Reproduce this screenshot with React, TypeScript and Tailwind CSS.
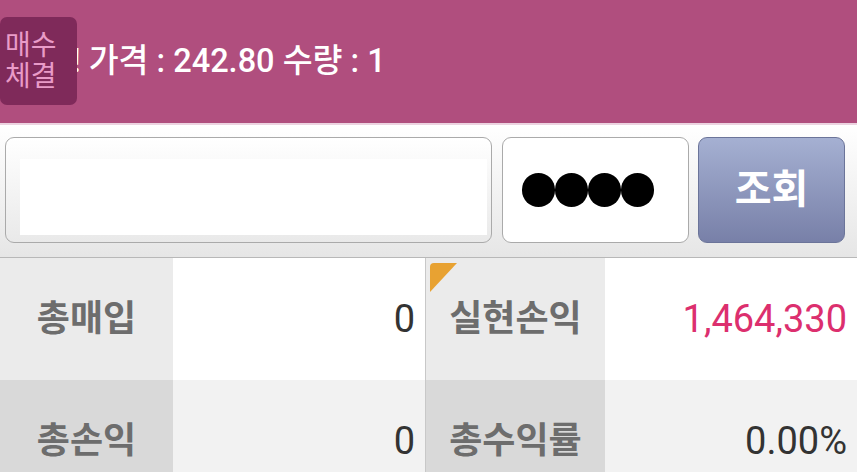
import React from 'react';

const font = { fontFamily: "Roboto, 'Noto Sans CJK KR', sans-serif" };

function Cell({ label, value, tone, valueClass, corner }: { label: string; value: string; tone: 'a' | 'b'; valueClass?: string; corner?: boolean }) {
  return (
    <>
      <div
        className={`relative flex items-center justify-center font-bold text-[36px] text-[#6d6d6d] ${tone === 'a' ? 'bg-[#ebebeb]' : 'bg-[#d9d9d9]'} ${corner !== undefined ? 'border-l border-[#c8c8c8]' : ''}`}
      >
        {corner && (
          <svg className="absolute left-[2px] top-[4px]" width="30" height="30" viewBox="0 0 30 30">
            <path d="M2 5 Q2 1 6 1 L29 1 L2 30 Z" fill="#e8a232" />
          </svg>
        )}
        {label}
      </div>
      <div
        className={`flex items-center justify-end pr-[10px] text-[38px] ${tone === 'a' ? 'bg-white' : 'bg-[#f2f2f2]'} ${valueClass ?? 'text-[#333333]'}`}
      >
        {value}
      </div>
    </>
  );
}

export default function App() {
  return (
    <div className="w-[857px] h-[472px] overflow-hidden bg-white" style={font}>
      {/* notice bar */}
      <div className="relative h-[125px] bg-[#b04e7e] flex items-center pl-[72px] border-b-2 border-[#ecd3e0]">
        <div className="absolute left-0 top-[17px] w-[77px] h-[88px] rounded-[7px] bg-[#7f2a5a] flex flex-col justify-center pl-[5px] text-[28px] leading-[31px] text-[#e99bc8]">
          <span>매수</span>
          <span>체결</span>
        </div>
        <span className="text-white text-[32.5px] font-medium leading-none">! 가격 : 242.80 수량 : 1</span>
      </div>

      {/* search bar */}
      <div className="h-[133px] bg-gradient-to-b from-white to-[#e6e6e6] flex items-start pt-[12px] pl-[5px] gap-[10px] border-b border-[#b8b8b8]">
        <div className="w-[487px] h-[106px] rounded-[9px] border border-[#aaaaaa] bg-gradient-to-b from-white to-[#e9e9e9] pl-[14px] pr-[4px] pt-[21px] pb-[7px]">
          <div className="w-full h-full bg-white" />
        </div>
        <div className="w-[187px] h-[106px] rounded-[9px] border border-[#aaaaaa] bg-white flex items-center pl-[19px]">
          <div className="w-[33px] h-[34px] rounded-full bg-black" />
          <div className="w-[33px] h-[34px] rounded-full bg-black" />
          <div className="w-[33px] h-[34px] rounded-full bg-black" />
          <div className="w-[33px] h-[34px] rounded-full bg-black" />
        </div>
        <button className="-ml-[1px] w-[147px] h-[106px] rounded-[9px] border border-[#6b7499] bg-gradient-to-b from-[#a5b0d2] to-[#7880a8] text-white text-[40px] font-bold">
          조회
        </button>
      </div>

      {/* summary grid */}
      <div className="grid grid-cols-[173px_252px_180px_252px] grid-rows-[122px_122px]">
        <Cell label="총매입" value="0" tone="a" />
        <Cell label="실현손익" value="1,464,330" tone="a" corner valueClass="text-[#dc2f6e]" />
        <Cell label="총손익" value="0" tone="b" />
        <Cell label="총수익률" value="0.00%" tone="b" corner={false} />
      </div>
    </div>
  );
}
